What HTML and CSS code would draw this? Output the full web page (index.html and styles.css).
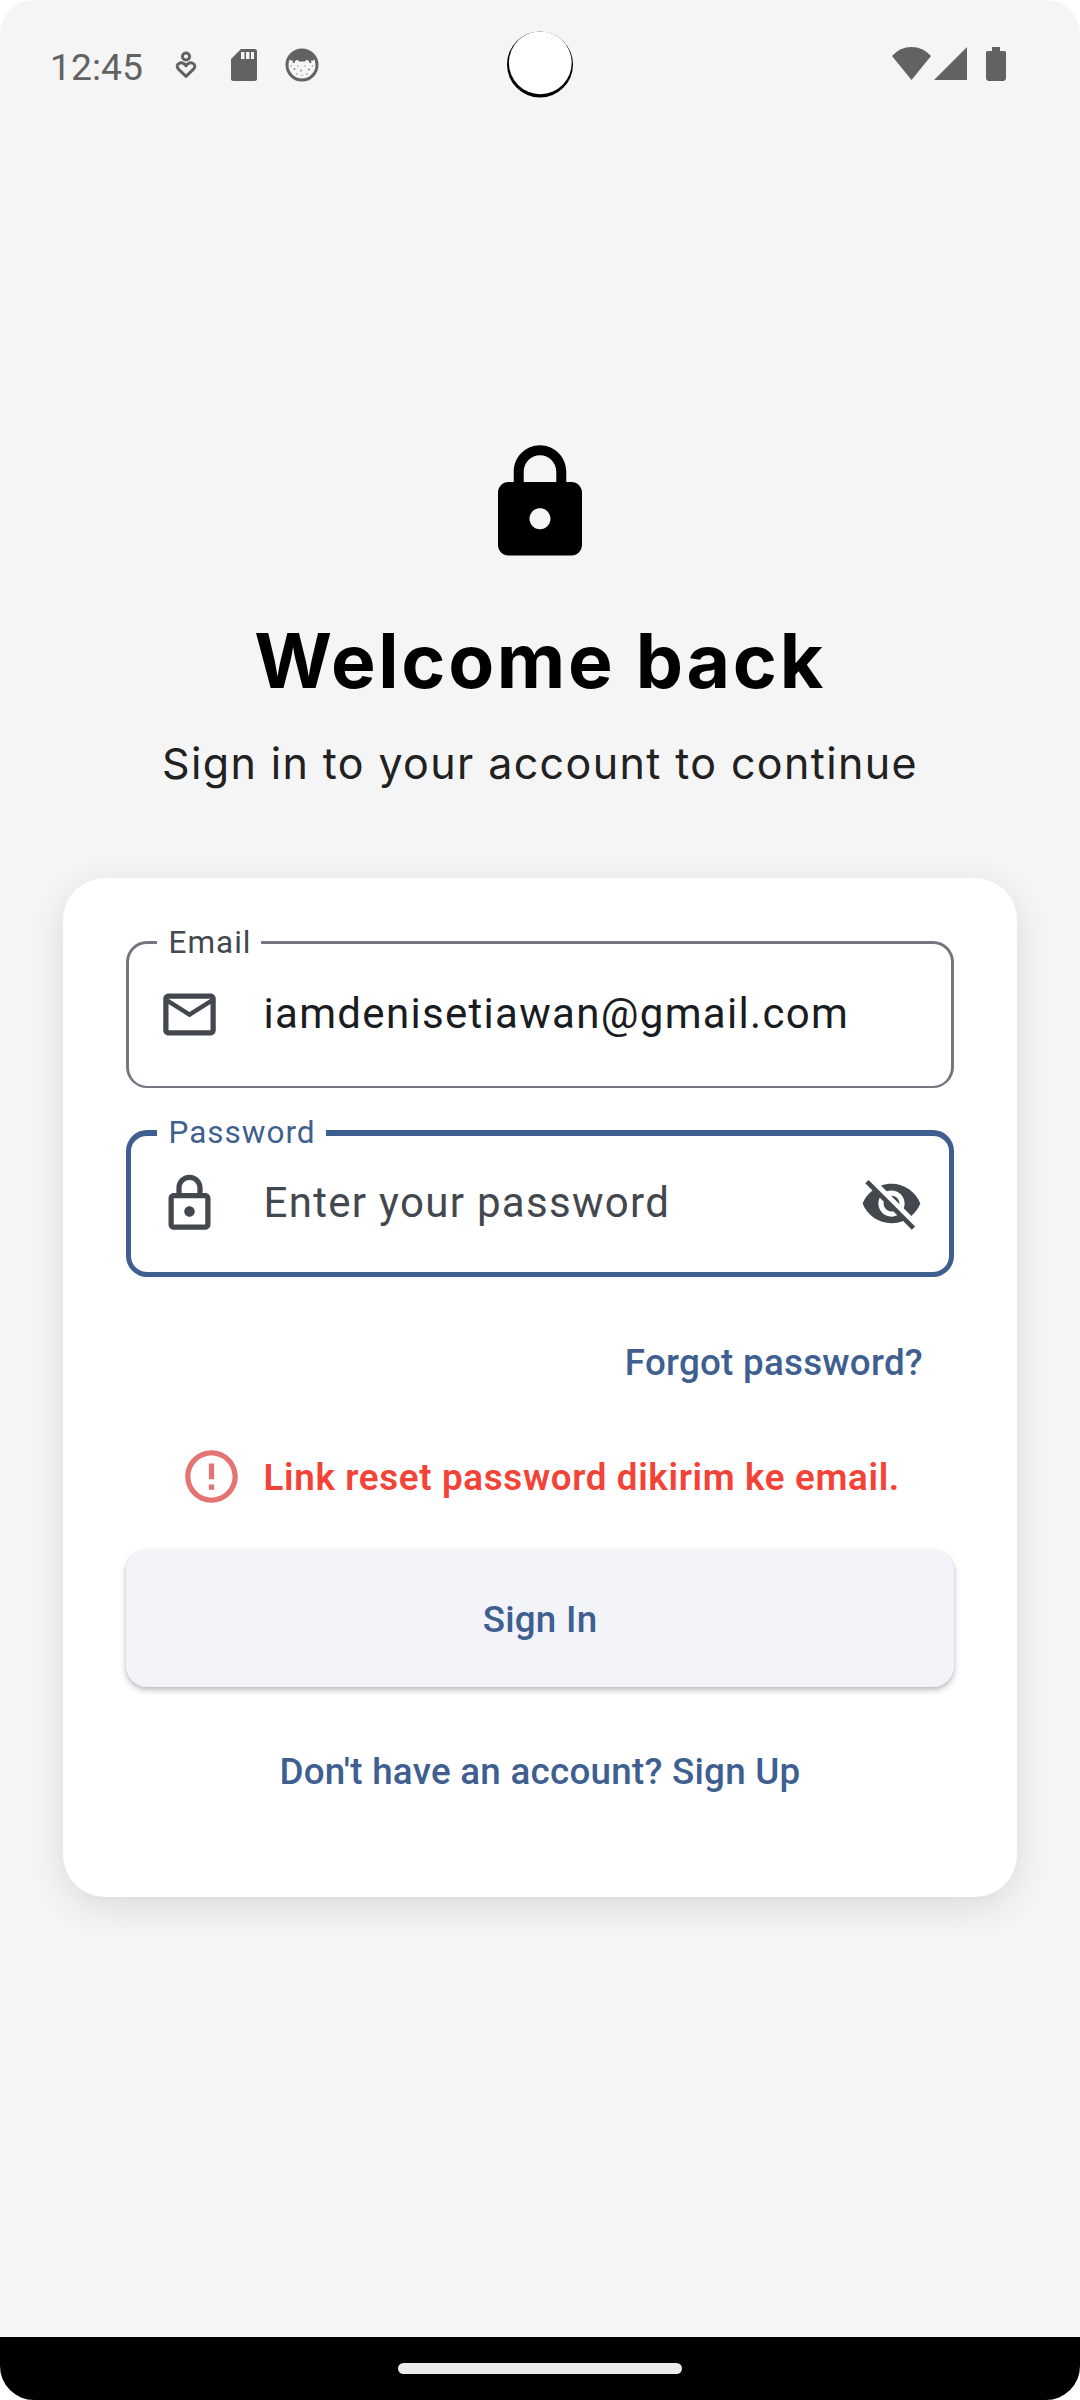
FILE: index.html
```html
<!DOCTYPE html>
<html lang="en">
<head>
<meta charset="utf-8">
<title>Sign in</title>
<link rel="stylesheet" href="styles.css">
</head>
<body>
<div class="screen">
  <header class="status-bar">
    <div class="status-left">
      <span class="clock">12:45</span>
      <svg class="icon-person" viewBox="0 0 22 30" fill="none" stroke="#626262" stroke-width="3"><circle cx="11" cy="6.500" r="3.600"/><path d="M11 26.300L3.500 19.200C-.8 14.500 6.400 9.700 11 15.800C15.600 9.700 22.800 14.500 18.500 19.200Z" stroke-linejoin="round"/></svg>
      <svg class="icon-sd" viewBox="0 0 26 32"><path fill="#626262" fill-rule="evenodd" d="M10 0H23.500Q26 0 26 2.500V29.500Q26 32 23.500 32H2.500Q0 32 0 29.500V10ZM10 3V10H13.500V3ZM15 3V10H18.500V3ZM20 3V10H23V3Z"/></svg>
      <svg class="icon-face" viewBox="0 0 34 34"><circle cx="17" cy="17" r="15" fill="none" stroke="#626262" stroke-width="3"/><path fill="#626262" d="M4 11Q8 2 17 2T30 11L27 13L25 11.500L24 13Q21 11 20 13.500H14Q13 11 10 13L9 11.500L7 13Z"/><path d="M9.500 11L8.500 15M24.500 11L25.500 15" stroke="#626262" stroke-width="2"/><g fill="#8b8b8b"><circle cx="6" cy="18" r=".8"/><circle cx="9.500" cy="21" r="1"/><circle cx="13" cy="18" r=".7"/><circle cx="16" cy="22.500" r=".9"/><circle cx="20" cy="18" r=".7"/><circle cx="24" cy="21.500" r="1"/><circle cx="27.500" cy="18" r=".8"/><circle cx="12" cy="26" r=".8"/><circle cx="17" cy="27.500" r=".7"/><circle cx="22" cy="26" r=".8"/></g></svg>
    </div>
    <svg class="camera" viewBox="0 0 68 68"><circle cx="34" cy="33.500" r="33"/><circle cx="34.300" cy="31.800" r="31.400" fill="#fff"/></svg>
    <div class="status-right">
      <svg class="icon-wifi" viewBox="0 0 39 33"><path d="M0 9Q8 0 19.500 0T39 9L19.500 33Z"/></svg>
      <svg class="icon-signal" viewBox="0 0 33 33"><path d="M33 0V33H0Z"/></svg>
      <svg class="icon-battery" viewBox="0 0 20 34"><path d="M6 0H14V4H19L20 5V32L18 34H2L0 32V5L1 4H6Z"/></svg>
    </div>
  </header>

  <main class="content">
    <svg class="hero-icon" viewBox="0 0 24 24"><path fill-rule="evenodd" d="M18 8h-1V6c0-2.760-2.240-5-5-5S7 3.240 7 6v2H6c-1.100 0-2 .9-2 2v10c0 1.100.9 2 2 2h12c1.100 0 2-.9 2-2V10c0-1.100-.9-2-2-2zm-6 9c-1.100 0-2-.9-2-2s.9-2 2-2 2 .9 2 2-.9 2-2 2zm3.100-9H8.900V6c0-1.710 1.390-3.100 3.100-3.100s3.100 1.390 3.100 3.100v2z"/></svg>
    <h1 class="title"><span class="title-text">Welcome back</span></h1>
    <p class="subtitle"><span class="subtitle-text">Sign in to your account to continue</span></p>

    <section class="card">
      <div class="field">
        <span class="field-label">Email</span>
        <svg class="icon" viewBox="0 0 24 24"><path d="M22 6c0-1.100-.9-2-2-2H4c-1.100 0-2 .9-2 2v12c0 1.100.9 2 2 2h16c1.100 0 2-.9 2-2V6zm-2 0l-8 5-8-5h16zm0 12H4V8l8 5 8-5v10z"/></svg>
        <span class="field-text field-value">iamdenisetiawan@gmail.com</span>
      </div>
      <div class="field field-focused">
        <span class="field-label">Password</span>
        <svg class="icon" viewBox="0 0 24 24"><path d="M18 8h-1V6c0-2.760-2.240-5-5-5S7 3.240 7 6v2H6c-1.100 0-2 .9-2 2v10c0 1.100.9 2 2 2h12c1.100 0 2-.9 2-2V10c0-1.100-.9-2-2-2zM9 6c0-1.660 1.340-3 3-3s3 1.340 3 3v2H9V6zm9 14H6V10h12v10zm-6-3c1.100 0 2-.9 2-2s-.9-2-2-2-2 .9-2 2 .9 2 2 2z"/></svg>
        <span class="field-text">Enter your password</span>
        <svg class="icon" viewBox="0 0 24 24"><path d="M12 7c2.760 0 5 2.240 5 5 0 .65-.13 1.260-.36 1.830l2.920 2.920c1.510-1.260 2.700-2.890 3.430-4.750-1.730-4.390-6-7.500-11-7.500-1.400 0-2.740.25-3.980.7l2.160 2.160C10.740 7.130 11.350 7 12 7zM2 4.270l2.280 2.280.46.46C3.080 8.300 1.780 10.020 1 12c1.730 4.390 6 7.500 11 7.500 1.550 0 3.030-.3 4.380-.84l.42.42L19.730 22 21 20.730 3.270 3 2 4.270zM7.530 9.800l1.550 1.550c-.05.21-.08.43-.08.65 0 1.660 1.340 3 3 3 .22 0 .44-.03.65-.08l1.550 1.550c-.67.33-1.410.53-2.200.53-2.760 0-5-2.240-5-5 0-.79.2-1.530.53-2.200zm4.310-.78l3.150 3.150.02-.16c0-1.660-1.340-3-3-3l-.17.01z"/></svg>
      </div>
      <a class="link forgot">Forgot password?</a>
      <div class="alert">
        <svg class="icon icon-alert" viewBox="0 0 24 24"><path d="M11 15h2v2h-2zm0-8h2v6h-2zm.99-5C6.470 2 2 6.480 2 12s4.470 10 9.990 10C17.520 22 22 17.520 22 12S17.520 2 11.990 2zM12 20c-4.420 0-8-3.580-8-8s3.580-8 8-8 8 3.580 8 8-3.580 8-8 8z"/></svg>
        <span class="alert-text">Link reset password dikirim ke email.</span>
      </div>
      <button class="button">Sign In</button>
      <a class="link signup">Don't have an account? Sign Up</a>
    </section>
  </main>

  <footer class="nav-bar"><span class="nav-handle"></span></footer>
</div>
</body>
</html>
```
FILE: styles.css
```css
* { box-sizing: border-box; }

body {
  margin: 0;
  background: #fff;
  font-family: Roboto, sans-serif;
}

svg { display: block; flex: none; }

.screen {
  display: flex;
  flex-direction: column;
  width: 1080px;
  height: 2400px;
  border-radius: 34px;
  overflow: hidden;
  background: #f5f5f5;
}

.status-bar {
  display: grid;
  grid-template-columns: 1fr 68px 1fr;
  height: 128px;
  padding: 0 74px 0 50px;
  flex: none;
}

.status-left { display: flex; height: 130px; align-items: center; }
.clock { width: 93px; font-size: 37.3px; color: #626262; line-height: 130px; padding-top: 3px; white-space: nowrap; }
.icon-person { width: 22px; height: 30px; margin-left: 32px; }
.icon-sd { width: 26px; height: 32px; margin-left: 34px; }
.icon-face { width: 34px; height: 34px; margin-left: 28px; }
.camera { width: 68px; height: 68px; margin-top: 31px; margin-left: 12px; }
.status-right { display: flex; justify-content: flex-end; padding-top: 47px; fill: #626262; }
.icon-wifi { width: 39px; height: 33px; }
.icon-signal { width: 33px; height: 33px; margin-left: 3px; }
.icon-battery { width: 20px; height: 34px; margin-left: 19px; }

.content {
  display: flex;
  flex-direction: column;
  align-items: center;
  flex: 1;
  padding: 312px 63px 0;
}

.hero-icon { width: 126px; height: 126px; }

.title {
  margin: 40px 0 0;
  height: 110px;
  font: 700 75px/110px Inter, sans-serif;
  color: #000;
  white-space: nowrap;
}

.subtitle {
  margin: 16px 0 0;
  height: 64px;
  font: 400 43px/63px Inter, sans-serif;
  color: #212121;
  white-space: nowrap;
}

.title-text { letter-spacing: 2.7px; }
.subtitle-text { letter-spacing: 1.38px; }

.card {
  display: flex;
  flex-direction: column;
  width: 954px;
  height: 1019px;
  margin-top: 82px;
  padding: 63px;
  border-radius: 42px;
  background: #fff;
  box-shadow: 0 10px 36px rgba(0, 0, 0, 0.11);
}

.field {
  position: relative;
  display: flex;
  align-items: center;
  flex: none;
  height: 147px;
  margin-bottom: 42px;
  padding: 0 28.500px 2px;
  border: 3px solid #74777f;
  border-bottom-width: 2px;
  border-radius: 21px;
  color: #43474e;
}

.field-focused {
  margin-bottom: 23px;
  padding: 0 26.500px 2px;
  border: 5px solid #3e5f90;
  border-top-width: 6px;
}

.field-label {
  position: absolute;
  top: -17px;
  left: 28px;
  height: 34px;
  padding: 0 10px 0 11.500px;
  background: #fff;
  font-size: 31.5px;
  line-height: 32px;
  letter-spacing: 1px;
}

.field-focused .field-label { top: -19px; left: 26px; color: #3e5f90; }

.icon { width: 63px; height: 63px; fill: #43474e; }

.field-text {
  flex: 1;
  margin-left: 43px;
  padding-bottom: 2px;
  font-size: 42px;
  letter-spacing: 1.31px;
}

.field-value { color: #191c20; }

.link, .button, .alert-text {
  font-size: 36.75px;
  font-weight: 500;
  letter-spacing: 0.26px;
}

.link { color: #3e5f90; white-space: nowrap; }

.forgot { align-self: flex-end; height: 126px; padding-right: 31px; line-height: 126px; }

.alert { display: flex; align-items: center; height: 63px; margin: 19px 0 0 53.500px; }
.icon-alert { fill: #e57373; }
.alert-text { margin-left: 21px; padding-top: 2px; color: #f44336; font-weight: 600; white-space: nowrap; letter-spacing: 0.66px; }

.button {
  height: 137px;
  margin-top: 42px;
  flex: none;
  padding: 2px 0 0;
  border: 0;
  border-radius: 21px;
  background: #f3f3fa;
  color: #3e5f90;
  font-family: inherit;
  box-shadow: 0 3px 6px rgba(0, 0, 0, 0.25), 0 1px 3px rgba(0, 0, 0, 0.06);
}

.signup { align-self: center; margin-top: 22px; line-height: 126px; }

.nav-bar {
  display: flex;
  justify-content: center;
  flex: none;
  height: 63px;
  padding-top: 26px;
  background: #000;
}

.nav-handle { width: 284px; height: 11px; border-radius: 6px; background: #ebebeb; }
```
